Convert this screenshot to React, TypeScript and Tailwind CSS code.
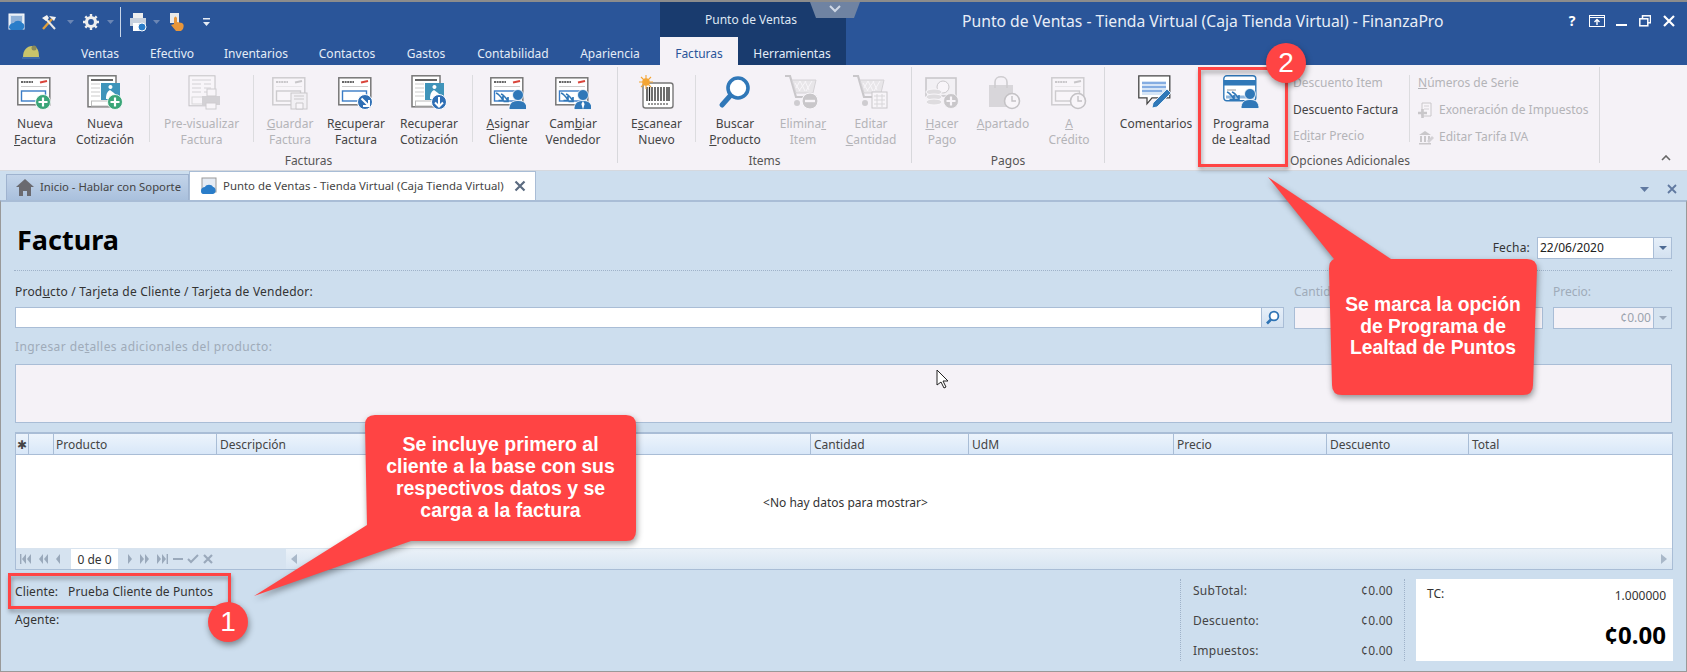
import React from "react";

const D = "grayscale opacity-30";

function Plus({ x = 26, y = 27, r = 7.5, c = "#3aa578" }: any) {
  return (
    <g>
      <circle cx={x} cy={y} r={r} fill={c} stroke="#fff" strokeWidth="0.8" />
      <path d={`M${x - 4.5} ${y}h9M${x} ${y - 4.5}v9`} stroke="#fff" strokeWidth="2.2" />
    </g>
  );
}
function Clock({ x = 27, y = 26, r = 7.5 }: any) {
  return (
    <g>
      <circle cx={x} cy={y} r={r} fill="#fff" stroke="#555" strokeWidth="1.6" />
      <path d={`M${x} ${y - 5}v5h4`} fill="none" stroke="#555" strokeWidth="1.4" />
    </g>
  );
}
function Bill() {
  return (
    <g>
      <rect x="0.8" y="2.8" width="32" height="27" fill="#fff" stroke="#777" strokeWidth="1.5" />
      <path d="M4 7h12" stroke="#666" strokeWidth="2" strokeDasharray="2 0.6" />
      <path d="M23 7.5l7-1.4" stroke="#d9443a" strokeWidth="2" />
      <path d="M4 11.5h26" stroke="#ccc" strokeWidth="1" />
      <rect x="4.5" y="16" width="24" height="10" fill="#fff" stroke="#3a7cc6" strokeWidth="1.4" />
    </g>
  );
}
function Quote() {
  return (
    <g>
      <rect x="1" y="0.8" width="28" height="31" fill="#fff" stroke="#777" strokeWidth="1.5" />
      <path d="M4 5h22" stroke="#666" strokeWidth="2" />
      <path d="M4 9h9M4 13h9M4 17h9M4 21h9" stroke="#ccc" strokeWidth="1.2" />
      <rect x="4.5" y="26" width="18" height="5" fill="#fff" stroke="#bbb" />
      <rect x="14" y="8" width="19" height="17" fill="#3f94ba" />
      <path d="M23.5 10a2 2 0 1 1-.1 0M19 24c0-6 2-8 4-9l4 3 2 2v4z" fill="#fff" />
    </g>
  );
}
function Person({ c = "#3078b8", x = 28, y = 15, tie }: any) {
  return (
    <g fill={c} stroke="#fff" strokeWidth="0.8">
      <circle cx={x} cy={y + 5} r="5.5" />
      <path d={`M${x - 9} ${y + 19.5}c0-6 3-9 9-9s9 3 9 9z`} />
      {tie && <path d={`M${x} ${y + 11}l-1.6 3 1.6 5.5 1.6-5.5z`} fill="#fff" stroke="none" />}
    </g>
  );
}
function Ico({ children, w = 36, h = 36, off }: any) {
  return (
    <svg width={w} height={h} viewBox={`0 0 ${w} ${h}`} className={off ? D : ""}>
      {children}
    </svg>
  );
}
function Arrows() {
  return <path d="M6 18c3 1 5 4 7 7M11 19c3 1 5 4 7 7M13 21v4.5h-4.5M18 22v4.5h-4.5" fill="none" stroke="#3078b8" strokeWidth="1.7" />;
}
function Cart({ off, table, minus }: any) {
  return (
    <Ico off={off}>
      <path d="M0 1h5l6 21h15" fill="none" stroke="#666" strokeWidth="2.2" />
      <path d="M7 5h24l-3 13H11z" fill="#ccc" stroke="#888" />
      <path d="M10 8l5 8M15 6l5 10M20 6l4 9M27 6l-6 10M21 6l-7 10M15 6l-4 7" stroke="#fff" strokeWidth="1" />
      <circle cx="12" cy="28" r="3" fill="#777" />
      <circle cx="22" cy="28" r="3" fill="#777" />
      {minus && (
        <g>
          <circle cx="25" cy="26" r="8" fill="#666" stroke="#fff" />
          <path d="M20 26h10" stroke="#fff" strokeWidth="2.4" />
        </g>
      )}
      {table && (
        <g>
          <rect x="19" y="17" width="15" height="16" fill="#fff" stroke="#666" />
          <path d="M21 21h11M21 25h11M21 29h11M24 19v13M29 19v13" stroke="#999" />
        </g>
      )}
    </Ico>
  );
}

function RBtn({ w, icon, l1, l2, off }: any) {
  return (
    <div style={{ width: w }} className="shrink-0 flex flex-col items-center">
      <div className="h-[41px] flex items-start justify-center">{icon}</div>
      <div className={`text-center text-[12px] leading-[16px] whitespace-nowrap ${off ? "text-[#b4b4b8]" : "text-[#444]"}`}>
        <div>{l1}</div>
        <div>{l2}</div>
      </div>
    </div>
  );
}
const Sep = () => <div className="w-px h-[67px] bg-[#dcdcdf] shrink-0" />;
const GSep = () => <div className="w-px h-[96px] mt-[2px] bg-[#d8d8dc] shrink-0" />;
function Group({ w, label, children, labelCls = "text-center" }: any) {
  return (
    <div style={{ width: w }} className="shrink-0 flex flex-col">
      <div className="flex h-[83px] pt-[10px]">{children}</div>
      <div className={`mt-[5px] text-[12px] leading-[16px] text-[#555] whitespace-nowrap ${labelCls}`}>{label}</div>
    </div>
  );
}

function Slot({ w, children }: any) {
  return <div style={{ width: w }} className="shrink-0 flex items-center justify-center">{children}</div>;
}
const Tiny = () => <svg width="7" height="4" viewBox="0 0 7 4"><path d="M0 0h7L3.5 4z" fill="#6b86b4" /></svg>;

function Qat() {
  return (
    <div className="h-[35px] flex items-center pt-[5px]">
      <Slot w={34}>
        <svg width="18" height="18" viewBox="0 0 18 18">
          <rect x="1" y="1" width="15" height="15" fill="#d8e4f2" stroke="#fff" />
          <rect x="3" y="3" width="11" height="8" fill="#8fb1d8" />
          <path d="M1 15c0-4 3-5 5-5 1-3 7-3 8 0 3 0 3 6 0 7H3z" fill="#2a7dc9" />
        </svg>
      </Slot>
      <Slot w={30}>
        <svg width="18" height="18" viewBox="0 0 18 18">
          <path d="M3 16L12 6" stroke="#e0a03c" strokeWidth="2.4" />
          <path d="M15 16L6 6" stroke="#e8e8e8" strokeWidth="2" />
          <path d="M2 5l5-3 2 3-3 3zM9 3l7 1-2 4z" fill="#f2f2f2" />
        </svg>
      </Slot>
      <Slot w={12}><Tiny /></Slot>
      <Slot w={30}>
        <svg width="16" height="16" viewBox="0 0 16 16">
          <circle cx="8" cy="8" r="4.5" fill="none" stroke="#eee" strokeWidth="3.2" />
          <path d="M8 0v3M8 13v3M0 8h3M13 8h3M2.3 2.3l2 2M11.7 11.7l2 2M13.7 2.3l-2 2M4.3 11.7l-2 2" stroke="#eee" strokeWidth="2.4" />
        </svg>
      </Slot>
      <Slot w={8}><Tiny /></Slot>
      <Slot w={12}><div className="w-px h-[30px] bg-[#c9d6e8]" /></Slot>
      <Slot w={24}>
        <svg width="18" height="20" viewBox="0 0 18 20">
          <rect x="4" y="1" width="10" height="6" fill="#eee" />
          <rect x="1" y="6" width="16" height="8" fill="#c9d2de" />
          <rect x="4" y="11" width="8" height="8" fill="#fff" />
          <circle cx="13" cy="15" r="4" fill="#2a7dc9" stroke="#fff" />
        </svg>
      </Slot>
      <Slot w={12}><Tiny /></Slot>
      <Slot w={30}>
        <svg width="16" height="20" viewBox="0 0 16 20">
          <rect x="1" y="1" width="9" height="10" fill="#e9e9e9" />
          <path d="M5 6c1-2 2-2 3 0v4l5 1c2 1 2 3 1 6l-2 2H7l-5-6 3-1z" fill="#e8963a" />
        </svg>
      </Slot>
      <Slot w={28}>
        <svg width="7" height="9" viewBox="0 0 7 9"><path d="M0 0h7v1.5H0zM0 4h7L3.5 8z" fill="#e6ecf5" /></svg>
      </Slot>
    </div>
  );
}

function TabTxt({ w, children }: any) {
  return <div style={{ width: w }} className="shrink-0 text-center text-[12px] text-[#e4ecf7] pt-[8px]">{children}</div>;
}

function WinBtns() {
  return (
    <div className="ml-auto flex items-center pr-[6px] h-[35px] pt-[3px]">
      <div className="w-[24px] text-center text-white font-bold text-[14px] leading-none">?</div>
      <Slot w={25}>
        <svg width="16" height="12" viewBox="0 0 16 12"><rect x="0.5" y="0.5" width="15" height="11" fill="none" stroke="#fff" /><path d="M0 2.5h16" stroke="#fff" /><path d="M8 10V5M5.5 7L8 4.5 10.5 7" fill="none" stroke="#fff" strokeWidth="1.4" /></svg>
      </Slot>
      <Slot w={24}><div className="w-[11px] h-[2.5px] bg-white mt-[8px]" /></Slot>
      <Slot w={24}>
        <svg width="12" height="12" viewBox="0 0 12 12"><rect x="3.5" y="0.8" width="8" height="7" fill="none" stroke="#fff" strokeWidth="1.5" /><rect x="0.8" y="3.8" width="8" height="7" fill="#2a5599" stroke="#fff" strokeWidth="1.5" /></svg>
      </Slot>
      <Slot w={24}>
        <svg width="12" height="12" viewBox="0 0 12 12"><path d="M1 1l10 10M11 1L1 11" stroke="#fff" strokeWidth="2.2" /></svg>
      </Slot>
    </div>
  );
}

function Ribbon() {
  const bill = (o: any, off?: boolean) => <Ico off={off}><Bill />{o}</Ico>;
  const quote = (o: any) => <Ico><Quote />{o}</Ico>;
  const down = <g><circle cx="28" cy="27" r="7.5" fill="#2f6fb5" stroke="#fff" /><path d="M28 22v9M24 27.5l4 4 4-4" fill="none" stroke="#fff" strokeWidth="2" /></g>;
  const diag = <g><circle cx="27" cy="27" r="7.5" fill="#2f6fb5" stroke="#fff" /><path d="M23.5 23.5l7 7M31 25v6h-6" fill="none" stroke="#fff" strokeWidth="2" /></g>;
  return (
    <div className="h-[106px] bg-[#f5f2f7] flex shrink-0 border-b border-[#d5d8de]">
      <Group w={617} label="Facturas">
        <RBtn w={70} icon={bill(<Plus />)} l1="Nueva" l2={<><u>F</u>actura</>} />
        <RBtn w={70} icon={quote(<Plus x={28} />)} l1="Nueva" l2="Cotización" />
        <div className="w-[9px]" />
        <Sep />
        <RBtn w={103} off icon={<Ico off><rect x="5" y="0.8" width="26" height="30" fill="#fff" stroke="#555" /><path d="M8 5h19M8 9h9M20 9h7M8 13h9M20 13h7M8 17h9M20 17h7" stroke="#888" /><rect x="8" y="22" width="12" height="7" fill="#fff" stroke="#999" /><rect x="18" y="21" width="18" height="9" fill="#888" /><rect x="23" y="14" width="9" height="7" fill="#fff" stroke="#777" /><rect x="22" y="28" width="10" height="6" fill="#fff" stroke="#777" /></Ico>} l1="Pre-visualizar" l2="Factura" />
        <Sep />
        <RBtn w={72} off icon={<Ico off><Bill /><rect x="19" y="18" width="16" height="16" fill="#eee" stroke="#666" /><path d="M22 21h10M22 24h10M24 28h7v6h-7z" stroke="#666" fill="#fff" /></Ico>} l1={<><u>G</u>uardar</>} l2="Factura" />
        <RBtn w={60} icon={bill(diag)} l1={<>R<u>e</u>cuperar</>} l2="Factura" />
        <RBtn w={86} icon={quote(down)} l1="Recuperar" l2="Cotización" />
        <Sep />
        <RBtn w={70} icon={<Ico><Bill /><Arrows /><Person /></Ico>} l1={<><u>A</u>signar</>} l2="Cliente" />
        <RBtn w={60} icon={<Ico><Bill /><Arrows /><Person tie /></Ico>} l1={<>Cam<u>b</u>iar</>} l2="Vendedor" />
      </Group>
      <GSep />
      <Group w={293} label="Items">
        <RBtn w={77} icon={
          <Ico w={38}>
            <rect x="5" y="8" width="30" height="25" rx="2.5" fill="#fff" stroke="#777" strokeWidth="1.4" />
            <path d="M9 12v14M11.5 12v14M14 12v14M17 12v14M20 12v14M23 12v14M26 12v14M29 12v14M31 12v14" stroke="#222" strokeWidth="1.3" />
            <path d="M10 29h20" stroke="#777" strokeWidth="1.4" strokeDasharray="2 1" />
            <circle cx="8" cy="7" r="3.8" fill="#f4a534" />
            <path d="M8 0v14M1 7h14M3 2l10 10M13 2L3 12" stroke="#f4a534" strokeWidth="1.1" />
          </Ico>} l1={<>E<u>s</u>canear</>} l2="Nuevo" />
        <Sep />
        <RBtn w={78} icon={
          <Ico><circle cx="21" cy="13" r="10" fill="#fff" stroke="#3078b8" strokeWidth="3.6" /><path d="M13 21L5 30" stroke="#3078b8" strokeWidth="5" strokeLinecap="round" /></Ico>} l1="Buscar" l2={<><u>P</u>roducto</>} />
        <RBtn w={58} off icon={<Cart off minus />} l1={<>Elimina<u>r</u></>} l2="Item" />
        <RBtn w={78} off icon={<Cart off table />} l1="Editar" l2={<><u>C</u>antidad</>} />
      </Group>
      <GSep />
      <Group w={192} label="Pagos">
        <RBtn w={60} off icon={
          <Ico off><rect x="2" y="3" width="30" height="18" fill="#eee" stroke="#666" strokeWidth="1.6" /><circle cx="19" cy="12" r="6" fill="#fff" stroke="#666" /><ellipse cx="10" cy="17" rx="8" ry="3" fill="#aaa" stroke="#fff" /><ellipse cx="10" cy="22" rx="8" ry="3" fill="#aaa" stroke="#fff" /><ellipse cx="10" cy="27" rx="8" ry="3" fill="#aaa" stroke="#fff" /><Plus x={27} y={26} c="#666" /></Ico>} l1={<><u>H</u>acer</>} l2="Pago" />
        <RBtn w={62} off icon={
          <Ico off><path d="M4 10h24v22H4z" fill="#999" /><path d="M10 13V7c0-7 12-7 12 0v6" fill="none" stroke="#777" strokeWidth="1.6" /><Clock /></Ico>} l1={<><u>A</u>partado</>} l2=" " />
        <RBtn w={70} off icon={<Ico off><Bill /><Clock /></Ico>} l1={<u>A</u>} l2="Crédito" />
      </Group>
      <GSep />
      <Group w={494} label="Opciones Adicionales" labelCls="pl-[185px]">
        <RBtn w={102} icon={
          <Ico>
            <path d="M0.8 0.8h31v22H14l-5 6v-6H0.8z" fill="#fff" stroke="#444" strokeWidth="1.3" />
            <rect x="4" y="6" width="24" height="14" fill="#d6e5f6" />
            <path d="M4 8h24M4 12h24M4 16h20" stroke="#6a9bdb" strokeWidth="1.6" />
            <path d="M14 33l1-5 14-14 4 4-14 14z" fill="#3078b8" stroke="#fff" strokeWidth="0.8" />
          </Ico>} l1="Comentarios" l2=" " />
        <RBtn w={68} icon={
          <Ico>
            <rect x="0.8" y="0.8" width="32" height="25" rx="3" fill="#fff" stroke="#3078b8" strokeWidth="1.4" />
            <rect x="0.8" y="5" width="32" height="5.5" fill="#3078b8" />
            <path d="M3 22h28" stroke="#8fb6dd" strokeWidth="3" />
            <path d="M4 15h9" stroke="#999" />
            <path d="M4 17c3 1 5 4 7 7M9 17c3 1 5 4 7 7M11 20v4.5H6.5M16 20v4.5h-4.5" fill="none" stroke="#3078b8" strokeWidth="1.6" />
            <Person x={27} y={14} />
          </Ico>} l1="Programa" l2="de Lealtad" />
        <div className="w-[18px]" />
        <div className="w-[116px] shrink-0 text-[12px] leading-[16px] text-[#444] flex flex-col gap-[10.5px]">
          <div className="text-[#b4b4b8]">Descuento Item</div>
          <div>Descuento Factura</div>
          <div className="text-[#b4b4b8]">Ed<u>i</u>tar Precio</div>
        </div>
        <Sep />
        <div className="pl-[8px] text-[12px] leading-[16px] text-[#b4b4b8] flex flex-col gap-[10.5px] whitespace-nowrap">
          <div><u>N</u>úmeros de Serie</div>
          <div className="flex items-center gap-[4px]">
            <svg width="17" height="17" viewBox="0 0 17 17" className={D}><path d="M4 1h9v13H4z" fill="#fff" stroke="#666" /><path d="M6 4h5M6 7h5" stroke="#888" /><path d="M0 11h9M4.5 7v9" stroke="#666" strokeWidth="2.6" /></svg>
            <span>Exoneración de Impuestos</span>
          </div>
          <div className="flex items-center gap-[4px]">
            <svg width="17" height="16" viewBox="0 0 17 16" className={D}><path d="M1 6l6-4 6 4zM2 7h2v6H2zM6 7h2v6H6zM10 7h2v6h-2zM1 14h12v1.4H1z" fill="#666" /><path d="M9 12l5-5 2 2-5 5z" fill="#888" /></svg>
            <span>Editar Tarifa IVA</span>
          </div>
        </div>
      </Group>
      <GSep />
      <div className="flex-1 flex items-end justify-end pr-[16px] pb-[9px]">
        <svg width="10" height="6" viewBox="0 0 10 6"><path d="M1 5l4-4 4 4" fill="none" stroke="#666" strokeWidth="1.6" /></svg>
      </div>
    </div>
  );
}

function TabStrip() {
  return (
    <div className="h-[29px] shrink-0 flex items-end pl-[6px] pr-[10px] bg-[#cddeee]">
      <div className="w-[183px] h-[26px] bg-gradient-to-b from-[#c3d4e9] to-[#a9c0dd] border border-[#9fb3cf] border-b-0 flex items-center pl-[9px] gap-[6px] text-[11.3px] text-[#444] whitespace-nowrap">
        <svg width="18" height="17" viewBox="0 0 18 17"><path d="M9 0L0 8h3v9h4v-5h4v5h4V8h3z" fill="#6a6a70" /></svg>
        <span>Inicio - Hablar con Soporte</span>
      </div>
      <div className="w-[347px] h-[29px] bg-white border border-[#a9bdd6] border-b-0 flex items-center pl-[10px] text-[11.4px] text-[#444] whitespace-nowrap">
        <svg width="18" height="18" viewBox="0 0 18 18" className="mr-[5px]">
          <rect x="2" y="1" width="14" height="14" fill="#e4ebf4" stroke="#999" />
          <path d="M1 14c0-3 2-4 4-4 1-3 7-3 8 0 3 0 4 6 0 7H3c-1 0-2-1-2-3z" fill="#2a7dc9" />
        </svg>
        <span>Punto de Ventas - Tienda Virtual (Caja Tienda Virtual)</span>
        <svg width="12" height="12" viewBox="0 0 12 12" className="ml-[10px]"><path d="M1.5 1.5l9 9M10.5 1.5l-9 9" stroke="#5b6b80" strokeWidth="2.2" /></svg>
      </div>
      <div className="ml-auto flex items-center gap-[18px] h-[20px] mb-[1px]">
        <svg width="9" height="5" viewBox="0 0 9 5"><path d="M0 0h9L4.5 5z" fill="#6079a0" /></svg>
        <svg width="10" height="10" viewBox="0 0 10 10"><path d="M1 1l8 8M9 1L1 9" stroke="#6079a0" strokeWidth="1.8" /></svg>
      </div>
    </div>
  );
}

function Drop({ off }: any) {
  return (
    <div className={`w-[18px] h-full border-l border-[#a9bdd6] flex items-center justify-center ${off ? "bg-[#d5e3f0]" : "bg-gradient-to-b from-[#e6eff9] to-[#d3e1f0]"}`}>
      <svg width="8" height="4" viewBox="0 0 8 4"><path d="M0 0h8L4 4z" fill={off ? "#9aa8ba" : "#4d6a94"} /></svg>
    </div>
  );
}

function Navi() {
  const g = "#9aa9bb";
  const L = (n: number, bar?: boolean, rev?: boolean) => (
    <svg width="14" height="10" viewBox="0 0 14 10" style={rev ? { transform: "scaleX(-1)" } : undefined}>
      {bar && <rect x="1" y="0" width="1.4" height="10" fill={g} />}
      <path d="M7 0v10L3 5z" fill={g} />
      {n > 1 && <path d="M12 0v10L8 5z" fill={g} />}
    </svg>
  );
  return (
    <div className="h-[21px] flex items-stretch bg-[#d6e3f0] border-t border-[#d8e3ee]">
      <div className="flex items-center gap-[3px] pl-[3px] w-[55px]">{L(2, true)}{L(2)}{L(1)}</div>
      <div className="w-[47px] bg-white text-center text-[12px] leading-[21px] text-[#333]">0 de 0</div>
      <div className="flex items-center gap-[3px] pl-[3px] w-[168px]">
        {L(1, false, true)}{L(2, false, true)}{L(2, true, true)}
        <svg width="12" height="10" viewBox="0 0 12 10"><path d="M1 5h10" stroke={g} strokeWidth="2" /></svg>
        <svg width="12" height="10" viewBox="0 0 12 10"><path d="M1 5l3 3 7-7" fill="none" stroke={g} strokeWidth="2" /></svg>
        <svg width="12" height="10" viewBox="0 0 12 10"><path d="M2 1l8 8M10 1L2 9" stroke={g} strokeWidth="2.2" /></svg>
      </div>
      <div className="flex-1 bg-gradient-to-b from-[#eaf1f8] to-[#d8e5f2] flex items-center justify-between px-[5px]">
        <svg width="6" height="10" viewBox="0 0 6 10"><path d="M6 0v10L0 5z" fill="#a9b8c9" /></svg>
        <svg width="6" height="10" viewBox="0 0 6 10"><path d="M0 0v10l6-5z" fill="#a9b8c9" /></svg>
      </div>
    </div>
  );
}

function Grid() {
  const cols: [number, string][] = [[13, "✱"], [25, ""], [163, "Producto"], [594, "Descripción"], [158, "Cantidad"], [205, "UdM"], [153, "Precio"], [142, "Descuento"], [204, "Total"]];
  return (
    <div className="mt-[9px] mr-[-1px] h-[138px] shrink-0 border border-[#a9bdd6] border-t-2 flex flex-col bg-white">
      <div className="h-[21px] shrink-0 flex bg-gradient-to-b from-[#edf4fc] to-[#d8e7f8] border-b border-[#a9bdd6]">
        {cols.map(([w, t], i) => (
          <div key={i} style={{ width: w }} className={`shrink-0 border-r border-[#a9bdd6] text-[12px] leading-[21px] text-[#444] whitespace-nowrap overflow-hidden ${i === 0 ? "text-[8px] text-center" : i === 2 ? "pl-[2px]" : "pl-[3px]"}`}>
            {t}
          </div>
        ))}
      </div>
      <div className="flex-1 flex items-center justify-center text-[12px] text-[#333] pt-[2px] pl-[3px]">&lt;No hay datos para mostrar&gt;</div>
      <Navi />
    </div>
  );
}

function Annotations() {
  return (
    <>
      <svg className="absolute left-0 top-0 pointer-events-none" width="1687" height="672" viewBox="0 0 1687 672">
        <g fill="none" stroke="#ff4444" strokeWidth="3" style={{ filter: "drop-shadow(1px 3px 2px rgba(0,0,0,.35))" }}>
          <rect x="1199.5" y="66.5" width="87" height="97" />
          <rect x="9.5" y="572.5" width="220" height="33" />
        </g>
        <g fill="#ff4444" style={{ filter: "drop-shadow(1px 3px 3px rgba(0,0,0,.4))" }}>
          <path d="M1268 175L1391 257H1527Q1537 257 1537 267L1533 383Q1533 393 1523 393H1342Q1332 393 1332 383L1329 267Q1329 259 1334 257z" />
          <path d="M375 413H626Q636 413 636 423V529Q636 539 626 539H411L254 594 367 523 365 423Q365 413 375 413z" />
          <circle cx="1286" cy="61" r="20" />
          <circle cx="228" cy="620" r="20" />
        </g>
      </svg>
      <div className="absolute left-[365px] top-[431px] w-[271px] text-center text-white font-bold text-[19.5px] leading-[22px] font-['Liberation_Sans',Arial,sans-serif]">
        Se incluye primero al<br />cliente a la base con sus<br />respectivos datos y se<br />carga a la factura
      </div>
      <div className="absolute left-[1329px] top-[292px] w-[208px] text-center text-white font-bold text-[19.3px] leading-[21.5px] font-['Liberation_Sans',Arial,sans-serif]">
        Se marca la opción<br />de Programa de<br />Lealtad de Puntos
      </div>
      <div className="absolute left-[1266px] top-[41px] w-[40px] h-[40px] flex items-center justify-center text-white text-[28px] font-['Liberation_Sans',Arial,sans-serif]">2</div>
      <div className="absolute left-[208px] top-[600px] w-[40px] h-[40px] flex items-center justify-center text-white text-[28px] font-['Liberation_Sans',Arial,sans-serif]">1</div>
      <svg className="absolute left-[936px] top-[367px]" width="13" height="20" viewBox="0 0 13 20">
        <path d="M1 1v15l4-3 3 6 2-1-3-6h5z" fill="#fff" stroke="#222" strokeWidth="1" />
      </svg>
    </>
  );
}

export default function App() {
  return (
    <div className="relative w-[1687px] h-[672px] overflow-hidden flex flex-col bg-[#cddeee] border-t-2 border-[#8c8c8c] text-[#444] font-['Noto_Sans',sans-serif]">
      <header className="h-[63px] shrink-0 flex bg-[#2a5599]">
        <div className="w-[660px] shrink-0 flex flex-col">
          <Qat />
          <div className="h-[28px] flex">
            <Slot w={62}>
              <svg width="18" height="16" viewBox="0 0 18 16"><path d="M1 14c0-7 4-11 9-11s7 4 7 11z" fill="#c9c46a" /><circle cx="12" cy="5" r="2.5" fill="#8a8a5a" /><path d="M0 14h18v2H0z" fill="#3e6aa8" /></svg>
            </Slot>
            <TabTxt w={76}>Ventas</TabTxt>
            <TabTxt w={68}>Efectivo</TabTxt>
            <TabTxt w={100}>Inventarios</TabTxt>
            <TabTxt w={82}>Contactos</TabTxt>
            <TabTxt w={76}>Gastos</TabTxt>
            <TabTxt w={98}>Contabilidad</TabTxt>
            <TabTxt w={96}>Apariencia</TabTxt>
          </div>
        </div>
        <div className="w-[186px] shrink-0 flex flex-col bg-[#193b6e]">
          <div className="h-[35px] pl-[45px] pt-[9px] text-[12px] text-[#dfe7f3] relative">
            Punto de Ventas
            <div className="absolute left-[150px] top-0 w-[50px] h-[16px] bg-[#6f83a2] flex justify-center [clip-path:polygon(0_0,100%_0,88%_100%,12%_100%)]">
              <svg width="14" height="8" viewBox="0 0 14 8" className="mt-[3px]"><path d="M2 1l5 5 5-5" fill="none" stroke="#cfd8e6" strokeWidth="2" /></svg>
            </div>
          </div>
          <div className="h-[28px] flex">
            <div className="w-[78px] bg-[#f5f2f7] text-[#2a5599] text-center text-[12px] pt-[8px]">Facturas</div>
            <TabTxt w={108}>Herramientas</TabTxt>
          </div>
        </div>
        <div className="flex-1 flex items-start">
          <div className="pl-[116px] pt-[8px] text-[15.7px] text-[#e8eef7] whitespace-nowrap">Punto de Ventas - Tienda Virtual (Caja Tienda Virtual) - FinanzaPro</div>
          <WinBtns />
        </div>
      </header>
      <Ribbon />
      <TabStrip />
      <main className="flex-1 flex flex-col border-t-2 border-[#a9bdd6] border-l border-r border-l-[#999] border-r-[#999] border-b border-b-[#999] pl-[14px] pr-[14px]">
        <div className="h-[69px] shrink-0 flex items-start border-b border-dotted border-[#9fb2c9] -ml-[1px]">
          <div className="pt-[18px] pl-[3px] text-[27px] leading-[40px] font-bold text-black">Factura</div>
          <div className="ml-auto flex items-center pt-[35px]">
            <span className="text-[12px] tracking-[0.2px] text-[#333] mr-[7px]">Fecha:</span>
            <div className="w-[135px] h-[22px] border border-[#a9bdd6] bg-white flex items-stretch justify-between text-[12px] leading-[20px] text-[#222] pl-[2px]">
              22/06/2020
              <Drop />
            </div>
          </div>
        </div>
        <div className="flex gap-[10px] mt-[13px]">
          <div className="flex-1">
            <div className="text-[12px] leading-[16px] tracking-[0.2px] text-[#333]">Prod<u>u</u>cto / Tarjeta de Cliente / Tarjeta de Vendedor:</div>
            <div className="mt-[7px] h-[21px] border border-[#a9bdd6] bg-white flex justify-end">
              <div className="w-[22px] h-full border-l border-[#a9bdd6] bg-gradient-to-b from-[#e6eff9] to-[#d3e1f0] flex items-center justify-center">
                <svg width="15" height="15" viewBox="0 0 15 15"><circle cx="9" cy="6" r="4.4" fill="#fff" stroke="#2f74b5" strokeWidth="1.8" /><path d="M6 9.5l-4 4" stroke="#2f74b5" strokeWidth="2.6" /></svg>
              </div>
            </div>
          </div>
          <div className="w-[249px] shrink-0">
            <div className="text-[12px] leading-[16px] text-[#9fabb9]">Cantidad:</div>
            <div className="mt-[7px] h-[22px] border border-[#a9bdd6] bg-[#f5f2f7]" />
          </div>
          <div className="w-[119px] shrink-0">
            <div className="text-[12px] leading-[16px] text-[#9fabb9]">Precio:</div>
            <div className="mt-[7px] h-[22px] border border-[#a9bdd6] bg-[#f5f2f7] flex justify-end text-[12px] leading-[20px] text-[#9aa3ae]">
              <span className="pr-[2px]">¢0.00</span>
              <Drop off />
            </div>
          </div>
        </div>
        <div className="mt-[10px] text-[12px] leading-[16px] tracking-[0.42px] text-[#9fabb9]">Ingresar de<u>t</u>alles adicionales del producto:</div>
        <div className="mt-[9px] h-[59px] shrink-0 border border-[#a9bdd6] bg-[#f5f2f7]" />
        <Grid />
        <div className="flex-1 flex">
          <div className="flex-1 text-[12px] tracking-[0.1px] text-[#333] pt-[13px]">
            <div className="leading-[18px]">Cliente:<span className="ml-[10px]">Prueba Cliente de Puntos</span></div>
            <div className="leading-[18px] mt-[10px]">Agente:</div>
          </div>
          <div className="mt-[9px] w-[225px] h-[82px] shrink-0 border-x border-dotted border-[#9fb2c9] pl-[12px] pr-[11px] text-[12px] tracking-[0.25px] text-[#444] flex flex-col justify-between pt-[3px] pb-[1px]">
            {[["SubTotal:", "¢0.00"], ["Descuento:", "¢0.00"], ["Impuestos:", "¢0.00"]].map(([a, b]) => (
              <div key={a} className="flex justify-between leading-[18px]"><span>{a}</span><span>{b}</span></div>
            ))}
          </div>
          <div className="ml-[11px] mt-[9px] mr-[-1px] w-[257px] h-[82px] shrink-0 bg-white pl-[11px] pr-[7px] pt-[6px] flex flex-col">
            <div className="flex justify-between text-[12px] leading-[18px] text-[#333]"><span>TC:</span><span className="pt-[2px]">1.000000</span></div>
            <div className="text-right text-[24px] leading-[32px] mt-[14px] font-bold text-black">¢0.00</div>
          </div>
        </div>
      </main>
      <Annotations />
    </div>
  );
}
